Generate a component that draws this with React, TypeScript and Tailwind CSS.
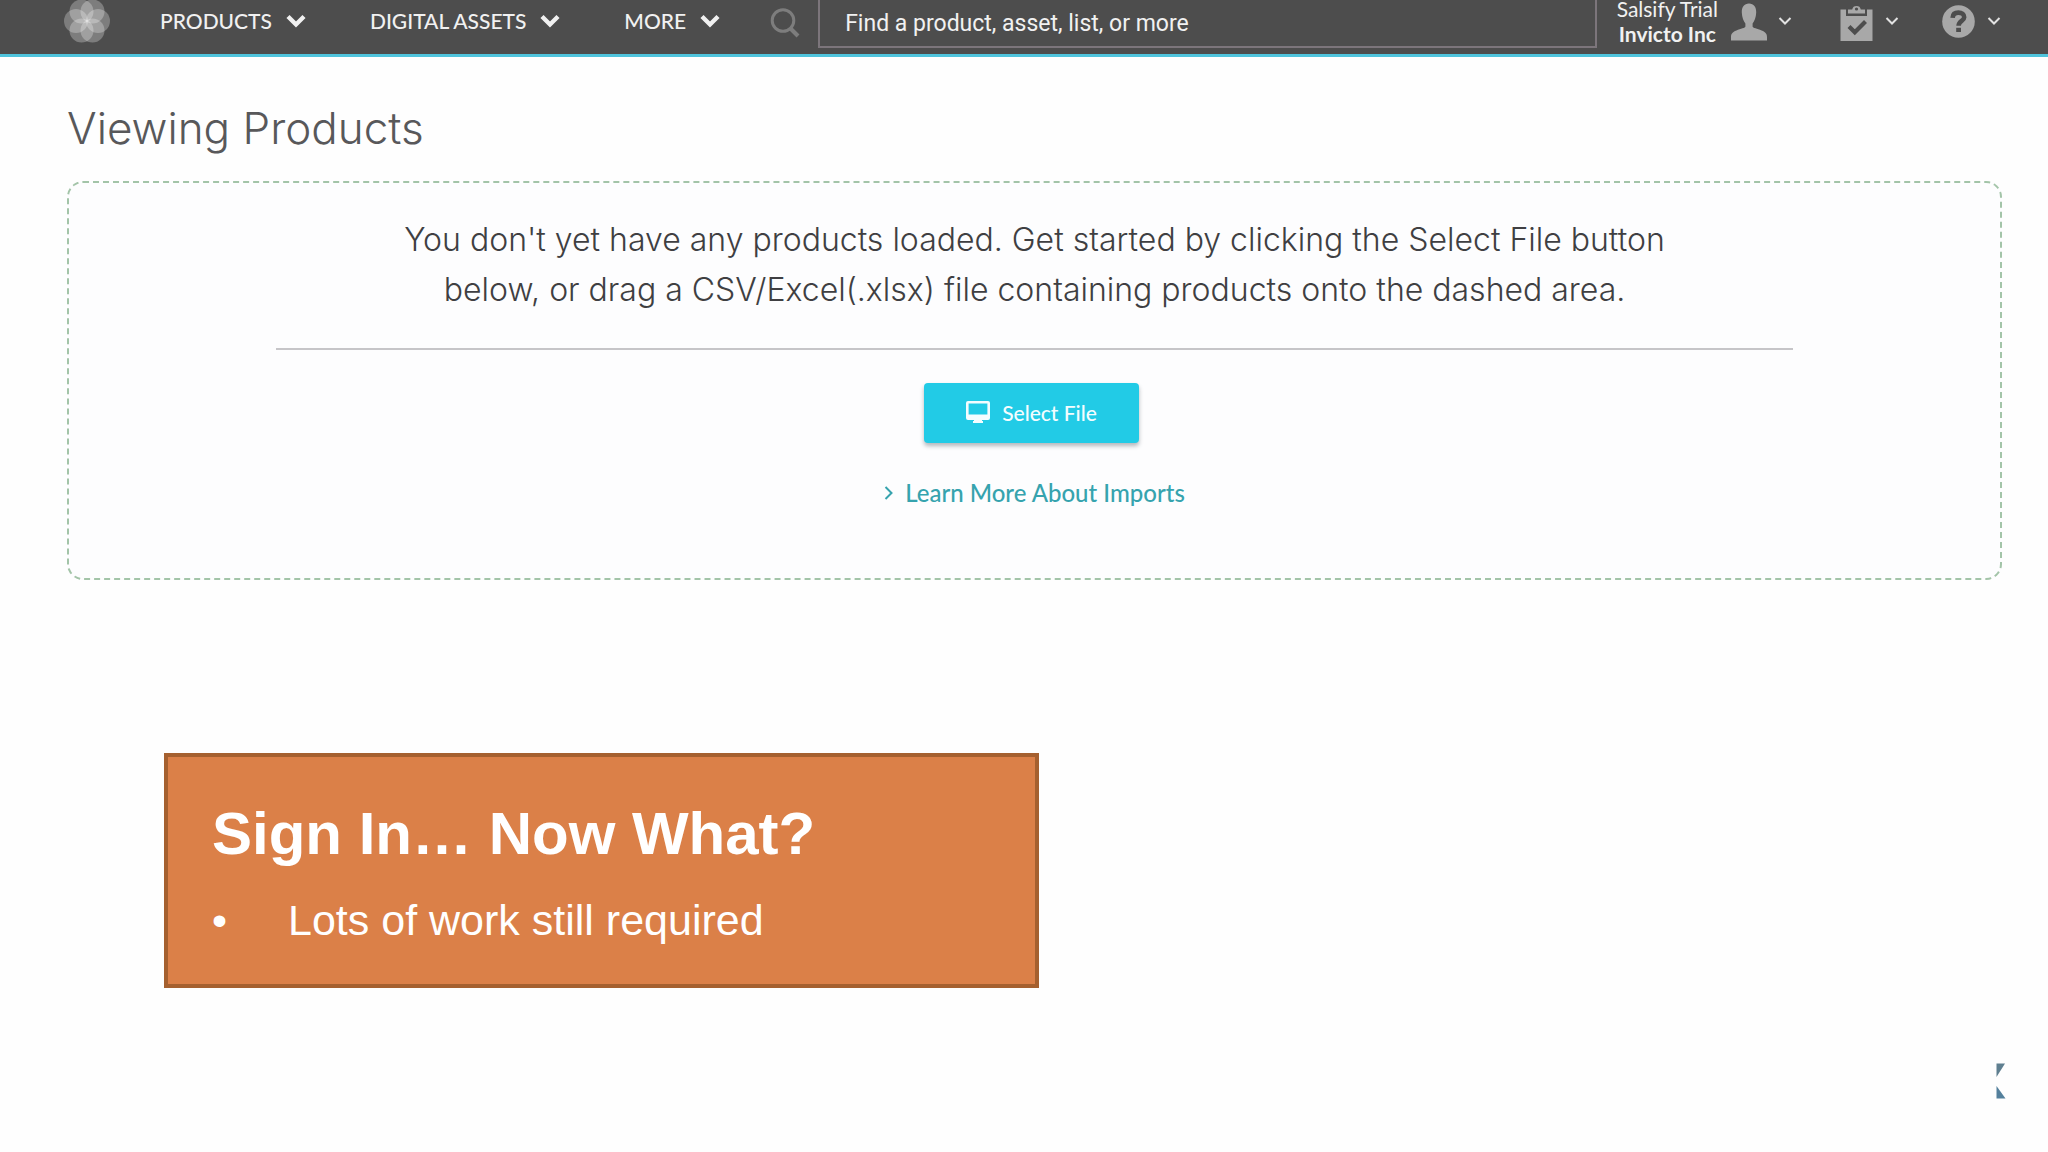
import type { ReactNode } from "react";

function BoldChevron() {
  return (
    <svg viewBox="0 0 20 14" className="h-[14px] w-5 shrink-0" aria-hidden="true">
      <path d="M2 2.5 10 10.5 18 2.5" fill="none" stroke="#f1f1f1" strokeWidth="4.4" />
    </svg>
  );
}

function ThinChevron() {
  return (
    <svg viewBox="0 0 14 10" className="h-[10px] w-[14px] shrink-0" aria-hidden="true">
      <path d="M1.5 2 7 7.5 12.5 2" fill="none" stroke="#e2e2e2" strokeWidth="2" />
    </svg>
  );
}

function Logo() {
  const petals = [
    [34, 24],
    [28.5, 33.5],
    [17.5, 33.5],
    [12, 24],
    [17.5, 14.5],
    [28.5, 14.5],
  ];
  return (
    <svg viewBox="0 0 46 48" className="h-12 w-[46px]" aria-hidden="true">
      {petals.map(([cx, cy]) => (
        <circle key={`${cx}-${cy}`} cx={cx} cy={cy} r="12" fill="#ffffff" fillOpacity="0.27" />
      ))}
    </svg>
  );
}

function NavItem({ children }: { children: ReactNode }) {
  return (
    <button type="button" className="flex items-center gap-[14px] text-[21px] leading-6 font-medium text-[#f1f1f1]">
      {children}
      <BoldChevron />
    </button>
  );
}

function Header() {
  return (
    <header className="flex h-[57px] items-start border-b-[3px] border-[#4fc4dc] bg-[#4d4d4d] pr-[47px] pl-16 font-['Lato',sans-serif]">
      <a href="#home" aria-label="Home" className="-mt-[3px] shrink-0">
        <Logo />
      </a>
      <nav aria-label="Main" className="ml-[50px] flex h-[42px] shrink-0 items-center gap-16 whitespace-nowrap">
        <NavItem>PRODUCTS</NavItem>
        <NavItem>DIGITAL ASSETS</NavItem>
        <NavItem>MORE</NavItem>
      </nav>
      <form role="search" className="ml-[50px] flex min-w-0 flex-1 items-start" onSubmit={(e) => e.preventDefault()}>
        <button type="submit" aria-label="Search" className="mt-2 mr-[18px] shrink-0">
          <svg viewBox="0 0 30 30" className="size-[30px]" aria-hidden="true">
            <circle cx="13" cy="12.5" r="10.8" fill="none" stroke="#7d7d7d" strokeWidth="3" />
            <path d="M20 20 28 28" stroke="#7d7d7d" strokeWidth="4" />
          </svg>
        </button>
        <input
          type="search"
          aria-label="Find a product, asset, list, or more"
          placeholder="Find a product, asset, list, or more"
          className="h-12 min-w-0 flex-1 border-x-2 border-b-2 border-[#7c757b] bg-transparent pr-4 pl-[25px] font-['Roboto',sans-serif] text-[23px] text-[#f1f1f1] outline-none placeholder:text-[#f1f1f1] placeholder:opacity-100"
        />
      </form>
      <button type="button" aria-label="Account" className="ml-5 flex h-[42px] shrink-0 items-center whitespace-nowrap text-[#f1f1f1]">
        <span className="mr-[13px] flex flex-col text-center text-[21px] leading-[25px]">
          <span>Salsify Trial</span>
          <span className="font-bold">Invicto Inc</span>
        </span>
        <svg viewBox="0 0 36 38" className="mt-[2px] mr-[11px] h-[38px] w-9" aria-hidden="true">
          <path
            d="M18 0.5C13.2 0.5 10.6 4 10.8 9.5C11 14.5 12.6 18.2 14.4 20.4V23.6C14.4 25 9.6 25.8 5.4 27.6C1.4 29.2 0 31 0 34V37.5H36V34C36 31 34.6 29.2 30.6 27.6C26.4 25.8 21.6 25 21.6 23.6V20.4C23.4 18.2 25 14.5 25.2 9.5C25.4 4 22.8 0.5 18 0.5Z"
            fill="#a8a8a8"
          />
        </svg>
        <ThinChevron />
      </button>
      <button type="button" aria-label="Tasks" className="ml-12 flex h-[42px] shrink-0 items-center gap-3">
        <svg viewBox="0 0 33 37" className="mt-[2px] h-[37px] w-[33px]" aria-hidden="true">
          <path d="M0.5 5.5H6V12H27V5.5H32.5V37H0.5Z" fill="#a8a8a8" />
          <path
            fillRule="evenodd"
            d="M8 5.5H12.2A4.4 4.4 0 0 1 20.8 5.5H25V9.5H8ZM16.5 3.4A1.6 1.6 0 1 0 16.5 6.6A1.6 1.6 0 1 0 16.5 3.4Z"
            fill="#a8a8a8"
          />
          <path d="M9 22.5 14.8 28.3 25.5 17.5" fill="none" stroke="#4d4d4d" strokeWidth="4.2" />
        </svg>
        <ThinChevron />
      </button>
      <button type="button" aria-label="Help" className="ml-[43px] flex h-[42px] shrink-0 items-center gap-3">
        <svg viewBox="0 0 33 33" className="size-[33px]" aria-hidden="true">
          <circle cx="16.5" cy="16.5" r="16.3" fill="#a8a8a8" />
          <path
            d="M10.6 12.8C10.8 9 13 7.6 16.4 7.6C19.9 7.6 22.2 9.4 22.2 12.2C22.2 16 16.6 16 16.6 20.8"
            fill="none"
            stroke="#4d4d4d"
            strokeWidth="4.6"
          />
          <rect x="14.2" y="22.8" width="4.8" height="4.2" fill="#4d4d4d" />
        </svg>
        <ThinChevron />
      </button>
    </header>
  );
}

export default function App() {
  return (
    <div className="min-h-screen bg-[#fefefe]">
      <Header />
      <main className="pt-[43px] pr-[46px] pl-[67px]">
        <h1 className="font-['Inter',sans-serif] text-[44px] leading-[56px] font-light text-[#58585a]">
          Viewing Products
        </h1>
        <section
          aria-label="Import products"
          className="mt-[25px] flex flex-col items-center rounded-[16px] border-2 border-dashed border-[#a3c4a8] bg-[#fdfdfe] pt-8 pb-[69px]"
        >
          <p className="max-w-[1300px] text-center font-['Inter',sans-serif] text-[32px] leading-[50px] font-light text-[#3f3f42]">
            You don't yet have any products loaded. Get started by clicking the Select File button below, or drag a
            CSV/Excel(.xlsx) file containing products onto the dashed area.
          </p>
          <hr className="mt-[33px] w-[78.6%] border-t-2 border-[#c6c5c8]" />
          <button
            type="button"
            className="mt-[33px] mr-[6px] flex h-[60px] items-center gap-3 rounded-[4px] bg-[#22cbe6] px-[42px] font-['Lato',sans-serif] text-[21px] font-medium text-[#f4fdff] shadow-[0_3px_4px_rgba(70,80,90,0.4)]"
          >
            <svg viewBox="0 0 24 22" className="-mt-[2px] h-[22px] w-6" aria-hidden="true">
              <path
                fillRule="evenodd"
                d="M2 0H22A2 2 0 0 1 24 2V17A2 2 0 0 1 22 19H16V20H17V22H7V20H8V19H2A2 2 0 0 1 0 17V2A2 2 0 0 1 2 0ZM2.6 2.6V13.5H21.4V2.6Z"
                fill="#f4fdff"
              />
            </svg>
            Select File
          </button>
          <a
            href="#imports"
            className="mt-[34px] flex items-center gap-3 font-['Lato',sans-serif] text-[24px] leading-8 font-medium text-[#36a3ae]"
          >
            <svg viewBox="0 0 9 14" className="h-[14px] w-[9px]" aria-hidden="true">
              <path d="M1.5 1 7.5 7 1.5 13" fill="none" stroke="#36a3ae" strokeWidth="2" />
            </svg>
            Learn More About Imports
          </a>
        </section>
        <section className="mt-[173px] ml-[97px] max-w-[875px] border-4 border-[#a5602f] bg-[#db8048] pt-[47px] pr-6 pb-10 pl-11 font-['Liberation_Sans',Arial,sans-serif] text-white">
          <h2 className="text-[60px] leading-[60px] font-bold">Sign In… Now What?</h2>
          <ul className="mt-8 text-[43px] leading-[48px]">
            <li className="flex">
              <span aria-hidden="true" className="w-[76px] shrink-0">
                •
              </span>
              Lots of work still required
            </li>
          </ul>
        </section>
      </main>
      <footer className="flex justify-end pt-[75px] pr-[42px]">
        <svg viewBox="0 0 10 36" className="h-9 w-[10px]" role="img" aria-label="Brand mark">
          <path d="M0.5 0.5H9L0.5 14Z" fill="#5f7f90" />
          <path d="M0.5 23 9.5 35.5H0.5Z" fill="#54809c" />
        </svg>
      </footer>
    </div>
  );
}
